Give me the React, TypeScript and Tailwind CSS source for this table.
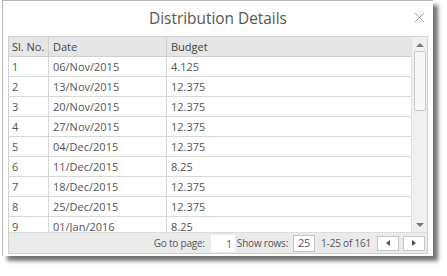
const rows = [
  ["1", "06/Nov/2015", "4.125"],
  ["2", "13/Nov/2015", "12.375"],
  ["3", "20/Nov/2015", "12.375"],
  ["4", "27/Nov/2015", "12.375"],
  ["5", "04/Dec/2015", "12.375"],
  ["6", "11/Dec/2015", "8.25"],
  ["7", "18/Dec/2015", "12.375"],
  ["8", "25/Dec/2015", "12.375"],
  ["9", "01/Jan/2016", "8.25"],
];

const App = () => {
  return (
    <div
      className="h-[276px] w-[447px] overflow-hidden bg-white"
      style={{ fontFamily: '"Open Sans", sans-serif' }}
    >
      <div className="ml-[2px] flex h-[256px] w-[431px] flex-col border-l border-t border-[#b8b8b8] bg-white shadow-[5px_5px_4px_rgba(0,0,0,0.55)]">
        <div className="relative flex h-[35px] shrink-0 items-center justify-center">
          <span className="text-[15.4px] text-[#555]">Distribution Details</span>
          <svg
            viewBox="0 0 12 12"
            className="absolute right-[8px] top-[11px] h-[11px] w-[11px]"
            fill="none"
            stroke="#999"
            strokeWidth="1"
          >
            <path d="M1 1l10 10M11 1L1 11" />
          </svg>
        </div>

        <div className="mx-[5px] flex h-[218px] flex-col border border-[#d0d0d0]">
          <div className="flex h-[195px] overflow-hidden">
            <div className="flex-1 overflow-hidden text-[11px]">
              <div className="flex h-[20px] items-center border-b border-[#d0d0d0] bg-[#e6e6e6] text-[#444]">
                <div className="w-[40px] border-r border-[#d0d0d0] pl-[3px] leading-[19px]">Sl. No.</div>
                <div className="w-[118px] border-r border-[#d0d0d0] pl-[4px] leading-[19px]">Date</div>
                <div className="flex-1 pl-[4px] leading-[19px]">Budget</div>
              </div>
              {rows.map((r) => (
                <div key={r[0]} className="flex h-[20px] border-b border-[#d8d8d8] text-[#555]">
                  <div className="w-[40px] border-r border-[#d8d8d8] pl-[3px] leading-[19px]">{r[0]}</div>
                  <div className="w-[118px] border-r border-[#d8d8d8] pl-[4px] leading-[19px]">{r[1]}</div>
                  <div className="flex-1 pl-[4px] leading-[19px]">{r[2]}</div>
                </div>
              ))}
            </div>
            <div className="flex w-[16px] flex-col items-center border-l border-[#e0e0e0] bg-[#f0f0f0]">
              <svg viewBox="0 0 8 4" className="mt-[6px] h-[4px] w-[8px]">
                <path d="M0 4L4 0L8 4Z" fill="#777" />
              </svg>
              <div className="mt-[4px] h-[60px] w-[12px] rounded-[2px] border border-[#c8c8c8] bg-[#f7f7f7]" />
              <div className="flex-1" />
              <svg viewBox="0 0 8 4" className="mb-[5px] h-[4px] w-[8px]">
                <path d="M0 0L4 4L8 0Z" fill="#777" />
              </svg>
            </div>
          </div>
          <div className="flex flex-1 items-center justify-end border-t border-[#dcdcdc] bg-[#ebebeb] pr-[2px] text-[10px] tracking-[-0.2px] text-[#555]">
            <span className="mr-[6px]">Go to page:</span>
            <div className="mr-[2px] h-[17px] w-[24px] bg-white pr-[3px] pt-[2px] text-right leading-[15px]">1</div>
            <span className="mr-[5px]">Show rows:</span>
            <div className="mr-[6px] flex h-[17px] w-[22px] items-center justify-center border border-[#c4c4c4] bg-white text-[11px]">25</div>
            <span className="mr-[6px]">1-25 of 161</span>
            <div className="mr-[4px] flex h-[15px] w-[22px] items-center justify-center border border-[#c8c8c8] bg-white">
              <svg viewBox="0 0 4 6" className="h-[6px] w-[4px]">
                <path d="M4 0L0 3L4 6Z" fill="#555" />
              </svg>
            </div>
            <div className="flex h-[15px] w-[22px] items-center justify-center border border-[#c8c8c8] bg-white">
              <svg viewBox="0 0 4 6" className="h-[6px] w-[4px]">
                <path d="M0 0L4 3L0 6Z" fill="#555" />
              </svg>
            </div>
          </div>
        </div>
      </div>
    </div>
  );
};

export default App;
